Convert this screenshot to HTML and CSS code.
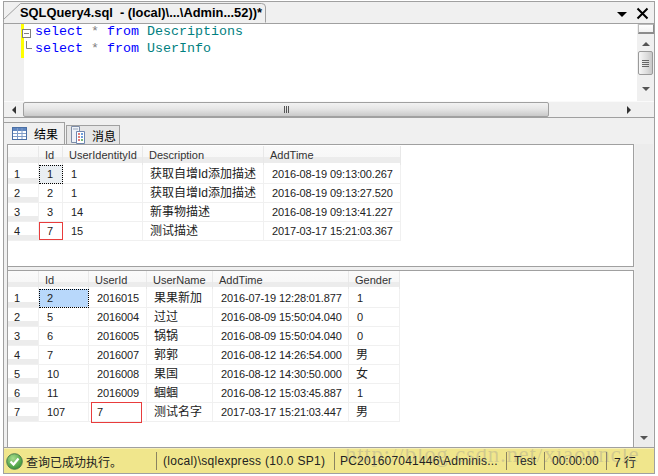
FILE: index.html
```html
<!DOCTYPE html>
<html lang="zh">
<head>
<meta charset="utf-8">
<title>SQLQuery4.sql</title>
<link rel="stylesheet" href="styles.css">
</head>
<body>
<div class="window">
  <div class="docbar">
    <svg class="tabshape" width="264" height="23" viewBox="0 0 264 23"><path d="M0.5 22.5V19.5L17.5 3.5H258.5Q262.5 3.5 262.5 7V22.5" fill="#f0f0f0" stroke="#a0a0a0"/></svg>
    <span class="doctitle">SQLQuery4.sql&nbsp; - (local)\...\Admin...52))*</span>
    <svg class="dropdown" width="11" height="6" viewBox="0 0 11 6"><path d="M0 0H10L5 5Z" fill="#000"/></svg>
    <svg class="closex" width="13" height="13" viewBox="0 0 13 13"><path d="M1.5 1.5L11.5 11.5M11.5 1.5L1.5 11.5" stroke="#000" stroke-width="2"/></svg>
  </div>
  <div class="editor">
    <div class="editor-main">
      <div class="margin"><span class="yellow"></span></div>
      <div class="code">
        <svg class="fold" width="14" height="30" viewBox="0 0 14 30"><rect x="0.5" y="5.5" width="8" height="8" fill="#fff" stroke="#808080"/><path d="M2 9.5H7" stroke="#808080" fill="none"/><path d="M4.5 17V24.5H10" stroke="#808080" fill="none"/></svg>
        <div class="codeline"><b class="kw">select</b> <b class="star">*</b> <b class="kw">from</b> <b class="tbl">Descriptions</b></div>
        <div class="codeline"><b class="kw">select</b> <b class="star">*</b> <b class="kw">from</b> <b class="tbl">UserInfo</b></div>
      </div>
      <div class="vscroll editor-vs">
        <span class="splitter"></span>
        <span class="arrow up"></span>
        <span class="thumb-v"><i></i><i></i><i></i><i></i></span>
        <span class="arrow down"></span>
      </div>
    </div>
    <div class="hscroll">
      <span class="arrow left"></span>
      <span class="thumb-h"><i></i><i></i><i></i></span>
      <span class="arrow right"></span>
    </div>
  </div>
  <div class="tabs">
    <div class="tab active">
      <svg width="15" height="13" viewBox="0 0 15 13"><rect x="0.5" y="0.5" width="14" height="12" fill="#fff" stroke="#4a6fa5"/><rect x="1" y="1" width="13" height="3" fill="#5f86c0"/><path d="M5.5 1V12M10 1V12M1 6.5H14M1 9.5H14" stroke="#7f9cc8"/></svg>
      <span>结果</span>
    </div>
    <div class="tab">
      <svg width="15" height="18" viewBox="0 0 15 18"><path d="M0.5 0.5H8.5V16.5H0.5Z" fill="#eef2f8" stroke="#7f8ea8"/><path d="M5.5 5.5H13.5V17.5H5.5Z" fill="#fff" stroke="#6f86b0"/><path d="M7 8H9M7 11H9M7 14H9" stroke="#d9534f" stroke-width="1.5"/><path d="M10 8H12M10 11H12" stroke="#3f7fcf" stroke-width="1.5"/><path d="M10 14H12" stroke="#4aa04a" stroke-width="1.5"/><path d="M2 3H7" stroke="#9aa7bd"/></svg>
      <span>消息</span>
    </div>
  </div>
  <div class="results">
    <div class="grids">
      <div class="panel first">
        <table class="grid">
          <colgroup><col class="c31"><col class="c24"><col class="c80"><col class="c121"><col class="c137"></colgroup>
          <tr><th></th><th>Id</th><th>UserIdentityId</th><th>Description</th><th>AddTime</th></tr>
          <tr><td class="rn">1</td><td class="focus-gray">1</td><td>1</td><td class="cjk">获取自增Id添加描述</td><td>2016-08-19 09:13:00.267</td></tr>
          <tr><td class="rn">2</td><td>2</td><td>1</td><td class="cjk">获取自增Id添加描述</td><td>2016-08-19 09:13:27.520</td></tr>
          <tr><td class="rn">3</td><td>3</td><td>14</td><td class="cjk">新事物描述</td><td>2016-08-19 09:13:41.227</td></tr>
          <tr><td class="rn">4</td><td class="redbox box-a">7</td><td>15</td><td class="cjk">测试描述</td><td>2017-03-17 15:21:03.367</td></tr>
        </table>
      </div>
      <div class="panel second">
        <table class="grid">
          <colgroup><col class="c31"><col class="c50"><col class="c58"><col class="c66"><col class="c136"><col class="c51"></colgroup>
          <tr><th></th><th>Id</th><th>UserId</th><th>UserName</th><th>AddTime</th><th>Gender</th></tr>
          <tr><td class="rn">1</td><td class="focus-blue">2</td><td>2016015</td><td class="cjk">果果新加</td><td>2016-07-19 12:28:01.877</td><td>1</td></tr>
          <tr><td class="rn">2</td><td>5</td><td>2016004</td><td class="cjk">过过</td><td>2016-08-09 15:50:04.040</td><td>0</td></tr>
          <tr><td class="rn">3</td><td>6</td><td>2016005</td><td class="cjk">锅锅</td><td>2016-08-09 15:50:04.040</td><td>0</td></tr>
          <tr><td class="rn">4</td><td>7</td><td>2016007</td><td class="cjk">郭郭</td><td>2016-08-12 14:26:54.000</td><td class="cjk">男</td></tr>
          <tr><td class="rn">5</td><td>10</td><td>2016008</td><td class="cjk">果国</td><td>2016-08-12 14:30:50.000</td><td class="cjk">女</td></tr>
          <tr><td class="rn">6</td><td>11</td><td>2016009</td><td class="cjk">蝈蝈</td><td>2016-08-12 15:03:45.887</td><td>1</td></tr>
          <tr><td class="rn">7</td><td>107</td><td class="redbox box-b">7</td><td class="cjk">测试名字</td><td>2017-03-17 15:21:03.447</td><td class="cjk">男</td></tr>
        </table>
      </div>
    </div>
    <div class="vscroll results-vs"><span class="arrow down"></span></div>
  </div>
  <div class="status">
    <div class="st st-msg">
      <svg width="17" height="17" viewBox="0 0 17 17"><defs><radialGradient id="ok" cx="0.4" cy="0.3" r="0.8"><stop offset="0" stop-color="#a5dd8c"/><stop offset="1" stop-color="#2c8a2c"/></radialGradient></defs><circle cx="8.5" cy="8.5" r="7.8" fill="url(#ok)" stroke="#4f7f4f"/><path d="M4.5 8.5L7.5 11.5L12.5 5.5" fill="none" stroke="#fff" stroke-width="2.2"/></svg>
      <span>查询已成功执行。</span>
    </div>
    <div class="st st-server">(local)\sqlexpress (10.0 SP1)</div>
    <div class="st st-user">PC201607041446\Adminis...</div>
    <div class="st st-db">Test</div>
    <div class="st st-time">00:00:00</div>
    <div class="st st-rows">7 行</div>
    <span class="watermark">http://blog.csdn.net/xiaouncle</span>
  </div>
</div>
</body>
</html>
```
FILE: styles.css
```css
* { box-sizing: border-box; }
html, body { margin: 0; padding: 0; }
body {
  width: 658px;
  height: 476px;
  background: #fff;
  overflow: hidden;
  font-family: "Liberation Sans", "Noto Sans CJK SC", sans-serif;
  font-size: 11px;
  color: #222;
}
.window {
  width: 652px;
  height: 473px;
  margin: 1px 0 0 3px;
  display: flex;
  flex-direction: column;
  background: #f0f0f0;
  border-right: 1px solid #a0a0a0;
  border-left: 1px solid #a0a0a0;
  border-bottom: 1px solid #a0a0a0;
}

/* document tab strip */
.docbar {
  position: relative;
  flex: none;
  height: 22px;
  border-top: 1px solid #a0a0a0;
  display: flex;
  align-items: center;
  padding-left: 16px;
}
.tabshape { position: absolute; left: -1px; top: -2px; }
.doctitle {
  position: relative;
  font-weight: bold;
  font-size: 12.85px;
  color: #000;
  white-space: nowrap;
}
.dropdown { position: absolute; left: 613px; top: 10px; }
.closex { position: absolute; left: 632px; top: 5px; }

/* editor */
.editor {
  flex: none;
  height: 95px;
  display: flex;
  flex-direction: column;
  border-bottom: 1px solid #a0a0a0;
  border-top: 1px solid #a0a0a0;
}
.editor-main { flex: 1; display: flex; min-height: 0; }
.margin { flex: none; width: 20px; background: #f0f0f0; display: flex; justify-content: flex-end; }
.yellow { width: 3px; height: 34px; background: #ff0; }
.code {
  position: relative;
  flex: 1;
  background: #fff;
  padding: 0 0 0 11px;
  font-family: "Liberation Mono", monospace;
  font-size: 13.33px;
}
.codeline { height: 17px; line-height: 15px; white-space: pre; }
.codeline b { font-weight: normal; }
.kw { color: #00f; }
.star { color: #808080; }
.tbl { color: #008080; }
.fold { position: absolute; left: -2px; top: 0; }

.vscroll { flex: none; width: 17px; background: #f0f0f0; display: flex; flex-direction: column; align-items: center; position: relative; }
.splitter {
  width: 16px; height: 10px; flex: none;
  background: linear-gradient(#fff, #f2f2f2);
  border: 1px solid #bbb; border-bottom: 2px solid #8c8c8c; border-right: 1px solid #8c8c8c;
}
.arrow { display: block; width: 0; height: 0; border: 4px solid transparent; flex: none; }
.arrow.up { border-bottom-color: #555; border-top-width: 0; margin-top: 8px; }
.arrow.down { border-top-color: #555; border-bottom-width: 0; }
.editor-vs .arrow.down { margin-top: 12px; }
.arrow.left { border-right-color: #333; border-left-width: 0; }
.arrow.right { border-left-color: #333; border-right-width: 0; }
.thumb-v {
  margin-top: 5px; width: 15px; height: 24px; flex: none;
  border: 1px solid #9a9a9a; border-radius: 2px;
  background: linear-gradient(90deg, #f7f7f7, #ddd 60%, #c8c8c8);
  display: flex; flex-direction: column; align-items: center; justify-content: center; gap: 1px;
}
.thumb-v i { display: block; width: 7px; height: 1px; background: #666; }

.hscroll {
  flex: none; height: 16px; background: #f0f0f0;
  display: flex; align-items: center; padding-left: 8px;
  border-top: 1px solid #fafafa;
}
.thumb-h {
  margin-left: 7px; flex: none; height: 15px;
  width: 526px;
  border: 1px solid #a0a0a0; border-radius: 2px;
  background: linear-gradient(#f2f2f2, #e6e6e6 45%, #c9c9c9);
  display: flex; align-items: center; justify-content: center; gap: 1px;
}
.thumb-h i { display: block; width: 1px; height: 7px; background: #555; }
.hscroll .arrow.right { margin-left: 78px; }

/* results tabs */
.tabs { flex: none; height: 26px; display: flex; align-items: flex-end; }
.tab {
  display: flex; align-items: center; gap: 6px;
  height: 19px; padding: 0 3px 0 4px;
  border: 1px solid #a0a0a0; border-bottom: 0;
  background: #e6e6e6;
  font-size: 12px; color: #000;
}
.tab.active {
  height: 22px; width: 62px; padding: 0 0 0 8px; gap: 7px;
  background: #f0f0f0; margin-left: -1px; margin-right: 1px;
}

/* results */
.results {
  flex: 1;
  min-height: 0;
  display: flex;
  padding-left: 3px;
  border-bottom: 1px solid #a0a0a0;
}
.grids { width: 627px; flex: none; display: flex; flex-direction: column; border-left: 1px solid #a0a0a0; border-top: 1px solid #a0a0a0; }
.panel { background: #fff; flex: none; border-right: 1px solid #a0a0a0; }
.panel.first { height: 122px; padding-top: 1px; border-bottom: 1px solid #a0a0a0; }
.panel.second { flex: 1; margin-top: 3px; border-top: 1px solid #a0a0a0; }
.results-vs { width: 18px; margin-left: 1px; justify-content: flex-end; padding-bottom: 7px; background: #ececec; }

.grid { border-collapse: separate; border-spacing: 0; table-layout: fixed; width: auto; }
.c24 { width: 24px; } .c31 { width: 31px; } .c50 { width: 50px; } .c51 { width: 51px; }
.c58 { width: 58px; } .c66 { width: 66px; } .c80 { width: 80px; } .c121 { width: 121px; }
.c136 { width: 136px; } .c137 { width: 137px; }
.grid tr { height: 19px; }
.grid th {
  height: 19px; padding: 0 0 1px 6px; font-weight: normal; text-align: left;
  color: #333; white-space: nowrap; overflow: hidden;
  background: linear-gradient(#fafafa 0, #f7f7f7 60%, #ececec 60%, #ececec 90%, #fff 90%);
  border-right: 1px solid #e8e8e8;
}
.second .grid tr:first-child { height: 18px; }
.second .grid th { height: 18px; }
.grid td {
  position: relative;
  height: 19px; padding: 0 0 0 8px; white-space: nowrap; overflow: visible;
  line-height: 14px;
  border-right: 1px solid #f0f0f0; border-bottom: 1px solid #f0f0f0;
  letter-spacing: -0.12px;
}
.grid td.cjk { font-size: 12px; letter-spacing: 0; padding-left: 7px; }
.grid td.rn {
  padding-left: 6px;
  background: linear-gradient(#fff 0, #fff 70%, #ececec 70%);
}
.focus-gray { background: #e9eef2; outline: 1px dotted #000; outline-offset: -1px; }
.focus-blue { background: #b8d8fb; outline: 1px dotted #000; outline-offset: -1px; }
.redbox::after { content: ""; position: absolute; border: 1px solid #e83c3c; }
.box-a::after { left: 0; right: -1px; top: 0; bottom: 0; }
.box-b::after { left: 2px; right: 4px; top: -1px; bottom: -2px; }

/* status bar */
.status {
  position: relative;
  flex: none;
  height: 25px;
  display: flex;
  align-items: stretch;
  background: #f0e68c;
  color: #222;
  font-size: 12px;
  border-top: 1px solid #f7f0b8;
  overflow: hidden;
}
.st { display: flex; align-items: center; white-space: nowrap; padding-left: 7px; border-right: 1px solid #8a8360; margin: 3px 0; flex: none; }
.st-msg { width: 153px; padding-left: 2px; gap: 3px; }
.st-server { width: 178px; padding-left: 6px; letter-spacing: 0.28px; }
.st-user { width: 172px; padding-left: 5px; letter-spacing: 0.2px; }
.st-db { width: 38px; }
.st-time { width: 62px; }
.st-rows { border-right: 0; }
.watermark {
  position: absolute; left: 341px; top: -7px;
  font-family: "Liberation Serif", serif;
  font-size: 23px; letter-spacing: 0.7px;
  color: rgba(130,130,150,0.28);
  white-space: nowrap;
}
```
